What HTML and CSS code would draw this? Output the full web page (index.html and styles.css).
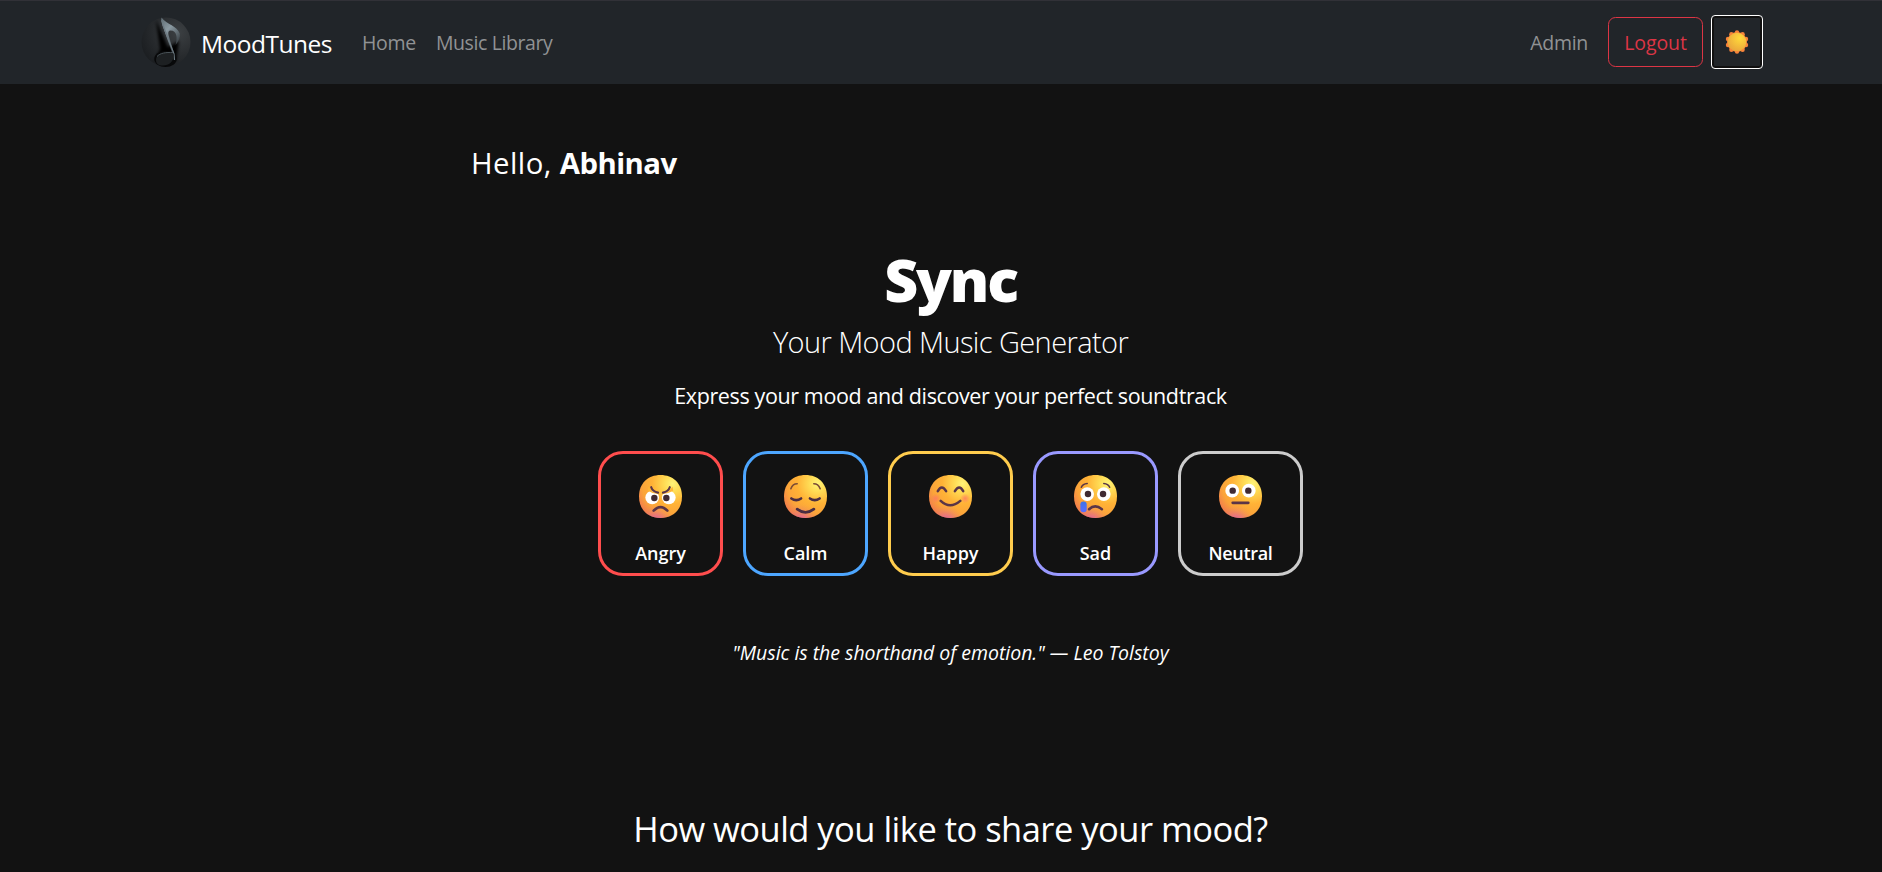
FILE: index.html
```html
<!DOCTYPE html>
<html lang="en">
<head>
<meta charset="utf-8">
<title>MoodTunes</title>
<link rel="stylesheet" href="styles.css">
</head>
<body>
<svg class="defs" width="0" height="0" aria-hidden="true">
  <defs>
    <radialGradient id="face" cx=".78" cy=".2" r=".95">
      <stop offset="0" stop-color="#fff478"/><stop offset=".2" stop-color="#ffdc55"/><stop offset=".5" stop-color="#ffb236"/><stop offset=".75" stop-color="#fba43a"/><stop offset="1" stop-color="#f0764f"/>
    </radialGradient>
    <radialGradient id="chin" cx=".4" cy="1.08" r=".4">
      <stop offset="0" stop-color="#d95ab8"/><stop offset="1" stop-color="#f08b5a" stop-opacity="0"/>
    </radialGradient>
    <radialGradient id="cheek"><stop offset="0" stop-color="#ff7366" stop-opacity=".75"/><stop offset="1" stop-color="#ff7366" stop-opacity="0"/></radialGradient>
    <linearGradient id="tear" x1="0" y1="0" x2="0" y2="1"><stop offset="0" stop-color="#3b74e8"/><stop offset="1" stop-color="#5a6cff"/></linearGradient>
    <radialGradient id="sun" cx=".65" cy=".3" r=".8"><stop offset="0" stop-color="#ffd93b"/><stop offset="1" stop-color="#e8a23c"/></radialGradient>
    <radialGradient id="disc" cx=".75" cy=".3" r=".8"><stop offset="0" stop-color="#3c4043"/><stop offset=".55" stop-color="#2a2d30"/><stop offset="1" stop-color="#1c1f22"/></radialGradient>
    <linearGradient id="metal" x1="0" y1="0" x2=".5" y2="1"><stop offset="0" stop-color="#5d6a71"/><stop offset=".4" stop-color="#8b9aa2"/><stop offset="1" stop-color="#2b3135"/></linearGradient>
    <filter id="soft" x="-50%" y="-50%" width="200%" height="200%"><feGaussianBlur stdDeviation="1.8"/></filter>
    <g id="head">
      <path d="M22 0C34.800 0 44 8.500 44 22S34.800 44 22 44 0 35.500 0 22 9.200 0 22 0Z" fill="url(#face)"/>
      <path d="M22 0C34.800 0 44 8.500 44 22S34.800 44 22 44 0 35.500 0 22 9.200 0 22 0Z" fill="url(#chin)"/>
    </g>
  </defs>
</svg>

<div class="page">
  <nav class="navbar">
    <div class="navbar-inner">
      <a class="brand">
        <svg class="logo" viewBox="0 0 50 50">
          <circle cx="25" cy="25" r="24.500" fill="url(#disc)"/>
          <path d="M15 3L27 30L38 24L35 44L14 44L19 32Z" fill="#030404" filter="url(#soft)"/>
          <ellipse cx="24.500" cy="42" rx="11.200" ry="8" fill="#08090a"/>
          <path d="M20.500 .5C26 7.500 36 9 38.800 16.500C39.500 20.500 37.500 24.500 34.500 28C36.800 21 36 13.500 29.500 13.500C27.500 13.500 27 15 27.500 18L33 36L31.500 37L20 4Z" fill="url(#metal)"/>
          <path d="M21.500 7L33 37L33.500 43" fill="none" stroke="#6d7a82" stroke-width="1.200"/>
          <path d="M15 43C15 38 20 35.500 27 35.500C31 36 32.500 35 32.700 38C32.700 44.500 28 48.500 22 48.500C17 48.500 15 46.500 15 43Z" fill="#1d2022"/>
          <path d="M16 39.500C19 36 25 35.200 32 35.500" fill="none" stroke="#4a5358" stroke-width="1"/>
        </svg>
        <span class="brand-name">MoodTunes</span>
      </a>
      <a class="link">Home</a>
      <a class="link library">Music Library</a>
      <a class="link admin">Admin</a>
      <button class="logout">Logout</button>
      <button class="theme" aria-label="Toggle theme">
        <svg viewBox="0 0 24 24">
          <g fill="#f8843a"><circle cx="12" cy="12" r="10"/><circle cx="12" cy="2.500" r="2.200"/><circle cx="17.600" cy="4.300" r="2.200"/><circle cx="21" cy="9" r="2.200"/><circle cx="21" cy="15" r="2.200"/><circle cx="17.600" cy="19.700" r="2.200"/><circle cx="12" cy="21.500" r="2.200"/><circle cx="6.400" cy="19.700" r="2.200"/><circle cx="3" cy="15" r="2.200"/><circle cx="3" cy="9" r="2.200"/><circle cx="6.400" cy="4.300" r="2.200"/></g>
          <circle cx="12" cy="12" r="9.300" fill="url(#sun)"/>
        </svg>
      </button>
    </div>
  </nav>

  <main class="content">
    <p class="greeting"><span class="hello">Hello, </span><strong>Abhinav</strong></p>
    <h1 class="title">Sync</h1>
    <p class="subtitle">Your Mood Music Generator</p>
    <p class="lead">Express your mood and discover your perfect soundtrack</p>

    <div class="moods">
      <button class="mood angry">
        <svg viewBox="0 0 44 44"><use href="#head"/>
          <circle cx="13.500" cy="23" r="7" fill="#fff"/><circle cx="30.500" cy="23" r="7" fill="#fff"/>
          <path d="M9.500 12L14 17L22 19.500L30 17L34.500 12L35 16L30 18.500L22 20L14 18.500L9 16Z" fill="#ffb637"/>
          <circle cx="15.700" cy="23.500" r="3.300" fill="#402a32"/><circle cx="28" cy="23.500" r="3.300" fill="#402a32"/>
          <g fill="none" stroke="#5a3547" stroke-width="2.200" stroke-linecap="round"><path d="M12.500 12.500Q14 17 19.500 18"/><path d="M31.500 12.500Q30 17 24.500 18"/><path d="M15 36.500Q22 29.500 29 36.500" stroke-width="2.700"/></g></svg>
        <span>Angry</span>
      </button>
      <button class="mood calm">
        <svg viewBox="0 0 44 44"><use href="#head"/>
          <g fill="none" stroke="#4a2d42" stroke-linecap="round"><g stroke="#7a4b35" stroke-width="1.600"><path d="M7 14Q9 9 13.500 9"/><path d="M37 14Q35 9 30.500 9"/></g><g stroke-width="2.600"><path d="M7.500 24Q12.500 27.500 17.500 24"/><path d="M26.500 24Q31.500 27.500 36.500 24"/><path d="M13.500 35Q22 41.500 30.500 35" stroke-width="2.900"/></g></g></svg>
        <span>Calm</span>
      </button>
      <button class="mood happy">
        <svg viewBox="0 0 44 44"><use href="#head"/>
          <circle cx="7" cy="24" r="5" fill="url(#cheek)"/><circle cx="37" cy="24" r="5" fill="url(#cheek)"/>
          <g fill="none" stroke="#5a3547" stroke-width="2.600" stroke-linecap="round"><path d="M9 16.500Q13 9 17.500 16.500"/><path d="M26.500 16.500Q31 9 35 16.500"/><path d="M12 26.500Q21.500 35.500 32 26.500"/></g></svg>
        <span>Happy</span>
      </button>
      <button class="mood sad">
        <svg viewBox="0 0 44 44"><use href="#head"/>
          <circle cx="13.500" cy="19.500" r="7" fill="#fff"/><circle cx="30.500" cy="19.500" r="7" fill="#fff"/>
          <circle cx="14.300" cy="19.500" r="3.300" fill="#402a32"/><circle cx="29.700" cy="19.500" r="3.300" fill="#402a32"/>
          <rect x="6.500" y="27" width="6.500" height="11" rx="3" fill="url(#tear)"/>
          <g fill="none" stroke="#5a3547" stroke-linecap="round"><path d="M7.500 12.500Q9 9 13.500 8.700" stroke-width="1.600"/><path d="M36.500 12.500Q35 9 30.500 8.700" stroke-width="1.600"/><path d="M15.500 35Q21.500 29 28.500 35" stroke-width="2.700"/></g></svg>
        <span>Sad</span>
      </button>
      <button class="mood neutral">
        <svg viewBox="0 0 44 44"><use href="#head"/>
          <circle cx="13.500" cy="16" r="7" fill="#fff"/><circle cx="30.500" cy="16" r="7" fill="#fff"/>
          <circle cx="14" cy="16" r="3.300" fill="#402a32"/><circle cx="30" cy="16" r="3.300" fill="#402a32"/>
          <path d="M14 28.500H30" stroke="#5a3547" stroke-width="2.700" stroke-linecap="round"/></svg>
        <span>Neutral</span>
      </button>
    </div>

    <p class="quote">"Music is the shorthand of emotion." — Leo Tolstoy</p>
    <h2 class="question">How would you like to share your mood?</h2>
  </main>
</div>
</body>
</html>
```
FILE: styles.css
```css
* { box-sizing: border-box; }
html, body { margin: 0; height: 872px; overflow: hidden; background: #121212; }
body { font-family: "Open Sans", "Noto Sans", sans-serif; color: #fff; white-space: nowrap; }
p, h1, h2 { margin: 0; }
button { font: inherit; color: inherit; background: none; padding: 0; }
.defs { position: absolute; }
.page { width: 1901px; height: 872px; overflow: hidden; }

.navbar { height: 84px; width: 1902px; background: #212529; border-top: 1px solid #313137; }
.navbar-inner { width: 1622px; height: 82px; margin-left: 141px; display: flex; align-items: center; }
.brand { display: flex; align-items: center; gap: 10px; width: 221px; font-size: 24.500px; letter-spacing: -.500px; }
.brand-name { padding-top: 2px; }
.logo { width: 50px; height: 50px; flex: none; }
.link { font-size: 19.500px; color: #909294; letter-spacing: -.3px; padding-top: 1px; }
.library { margin-left: 20px; letter-spacing: -.4px; }
.admin { margin-left: auto; }
.logout { width: 95px; height: 50px; margin-left: 20px; border: 1px solid #dc3545; border-radius: 7.500px; color: #dc3545; font-size: 19.500px; letter-spacing: -.1px; }
.theme { width: 52px; height: 54px; margin-left: 8px; border: 1px solid #fff; border-radius: 4px; box-shadow: inset 0 0 0 2px #101010; display: grid; place-items: center; }
.theme svg { width: 24px; height: 24px; }

.content { display: flex; flex-direction: column; align-items: center; }
.greeting { width: 961px; margin-top: 59px; padding-left: 1px; font-size: 29.300px; line-height: 40px; }
.hello { font-weight: 380; letter-spacing: .450px; }
.greeting strong { font-weight: 670; letter-spacing: -.550px; }
.title { margin-top: 60px; font-size: 59px; line-height: 72px; font-weight: 770; letter-spacing: -2.200px; }
.subtitle { margin-top: 7px; font-size: 29px; line-height: 40px; font-weight: 310; letter-spacing: -.600px; }
.lead { margin-top: 19px; font-size: 21.500px; line-height: 30px; letter-spacing: -.380px; }
.moods { display: flex; gap: 20px; margin-top: 40px; }
.mood { width: 125px; height: 125px; border: 3px solid; border-radius: 25px; display: flex; flex-direction: column; align-items: center; padding-top: 21px; }
.mood svg { width: 43px; height: 43px; }
.mood span { margin-top: 23px; font-size: 18px; line-height: 24px; font-weight: 640; color: #fff; }
.angry { border-color: #ff4d4d; }
.calm { border-color: #4da6ff; }
.happy { border-color: #ffcc4d; }
.sad { border-color: #9999ff; }
.neutral { border-color: #cccccc; }
.neutral span { letter-spacing: -.300px; }
.quote { margin-top: 62px; font-size: 19.500px; line-height: 30px; font-style: italic; letter-spacing: -.030px; }
.question { margin-top: 138px; font-size: 34.500px; line-height: 46px; font-weight: 400; letter-spacing: -.520px; }
```
